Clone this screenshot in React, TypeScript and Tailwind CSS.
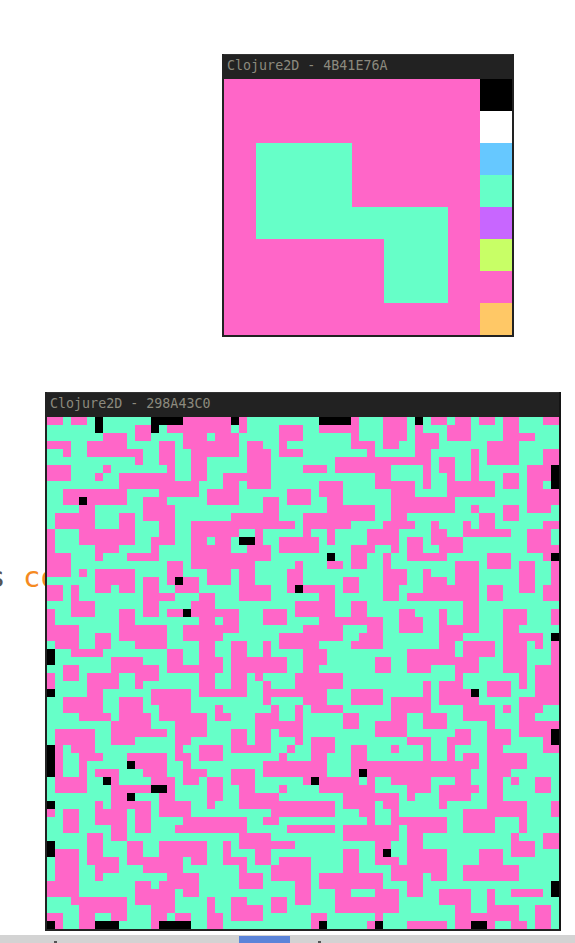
const PINK = [
  '0-2 3-5 17-23 24-25 38-39 42-45 48-50 51-53 54-56 57-59 62-64',
  '11-13 15-23 24-25 29-32 34-39 42-45 46-47 50-53 57-59',
  '7-10 11-13 17-20 21-24 29-32 38-39 42-45 46-49 50-53 57-61',
  '0-3 5-10 14-16 17-24 25-27 29-30 38-41 42-44 46-49 55-59',
  '2-3 5-12 14-16 18-24 25-28 29-32 40-41 46-48 53-54 55-59 62-64',
  '11-12 14-16 18-20 25-28 36-48 49-51 53-54 55-59 62-64',
  '0-3 7-8 15-16 18-20 25-28 32-35 36-43 47-48 49-51 53-54 60-63',
  '0-3 6-7 9-16 18-20 22-28 41-43 47-48 50-51 53-54 57-59 60-63',
  '9-19 22-24 25-28 34-37 41-46 47-48 50-56 57-59 60-62',
  '2-10 14-19 20-24 30-33 34-37 43-46 50-56 60-64',
  '2-4 5-10 12-15 20-24 27-29 30-33 35-37 43-51 60-64',
  '4-6 12-16 27-29 35-41 43-51 53-54 57-59 60-63',
  '1-6 9-11 12-16 23-29 32-41 43-45 54-56 57-59',
  '1-6 9-11 14-16 18-31 32-38 42-46 48-49 52-53 54-56 62-64',
  '0-1 4-11 14-16 18-24 26-27 32-33 35-36 40-44 48-50 52-58 60-63',
  '0-1 4-11 13-16 18-20 21-23 26-27 29-34 35-36 40-44 45-47 48-52 60-63',
  '0-1 6-9 13-14 18-23 25-28 29-34 38-41 43-44 45-47 49-52 60-64',
  '0-3 6-7 10-14 18-28 38-40 42-43 45-50 55-58 62-63',
  '0-3 15-17 18-26 31-32 35-37 38-40 42-43 51-54 55-58 59-61 63-64',
  '0-3 4-5 6-11 15-17 20-23 24-26 30-32 42-45 47-48 51-54 59-61 63-64',
  '6-11 12-14 15-16 17-19 20-23 24-26 30-32 37-39 42-45 47-50 51-54 59-61 63-64',
  '0-2 3-4 6-8 9-11 12-14 16-19 24-28 30-31 32-36 37-39 42-44 47-54 55-57 59-61 62-64',
  '0-2 3-4 12-16 19-21 24-28 34-36 42-44 45-54 55-57 62-64',
  '3-6 12-14 18-21 31-36 38-40 52-54',
  '0-1 3-6 9-11 12-14 15-17 18-24 27-30 31-36 38-40 44-46 49-50 52-54 57-60 63-64',
  '0-1 9-11 19-21 22-24 27-30 34-42 44-47 49-50 52-54 57-60 63-64',
  '0-4 9-15 17-24 32-37 40-42 44-47 49-54 57-59',
  '0-4 6-8 9-15 17-22 29-37 39-42 49-52 57-62',
  '1-4 6-8 11-15 19-21 23-25 27-28 29-34 38-42 49-51 52-56 57-60 61-62 63-64',
  '3-7 15-17 19-21 23-25 27-28 32-35 45-51 52-56 57-60 63-64',
  '8-12 15-17 19-22 23-30 32-35 41-43 45-54 57-60 63-64',
  '2-4 8-14 15-22 23-30 32-34 41-43 45-48 51-54 57-60 61-64',
  '0-1 2-4 5-9 11-14 19-21 23-25 26-27 31-37 51-52 59-60 61-64',
  '0-1 5-9 11-12 19-21 23-25 27-28 31-37 47-48 49-52 55-58 59-60 61-64',
  '5-7 13-18 19-25 27-35 38-42 47-48 49-53 55-58 61-64',
  '2-7 9-12 13-18 27-28 32-35 38-42 43-48 49-54 59-64',
  '2-7 9-12 14-18 21-22 28-29 31-32 33-37 43-48 52-56 57-58 59-62',
  '4-8 9-13 14-20 21-23 26-29 31-32 37-39 43-45 47-50 52-56 59-61',
  '8-13 16-20 26-32 37-39 41-45 47-50 55-56 59-64',
  '1-6 8-15 16-20 23-25 26-28 29-32 41-45 51-53 55-58 59-63',
  '1-6 8-11 16-18 23-25 26-28 31-32 33-36 45-48 50-53 55-58 62-63',
  '1-2 3-6 16-17 19-22 23-28 30-31 33-36 38-40 43-44 47-48 50-51 55-57 62-64',
  '1-2 4-7 10-15 16-18 19-22 29-30 33-35 38-40 47-48 50-51 52-54 55-60',
  '1-2 4-5 11-15 17-18 27-35 38-54 55-60',
  '1-2 4-5 6-9 12-15 17-20 23-26 27-35 38-39 40-53 55-58',
  '1-5 8-9 13-16 17-19 20-22 23-26 32-33 34-39 40-41 43-48 51-53 55-57 58-59 61-63',
  '1-5 8-13 15-16 20-22 24-26 29-30 34-41 45-48 49-54 55-57 61-63',
  '8-10 14-16 20-22 24-29 37-44 45-46 49-53 55-57',
  '6-7 8-13 14-18 20-21 24-36 37-41 42-44 49-50 55-60 63-64',
  '0-1 2-4 6-10 11-13 14-18 28-36 39-41 43-44 52-60 63-64',
  '2-4 6-10 11-13 17-25 27-29 40-41 43-50 52-56 59-60',
  '2-4 8-10 11-13 16-25 30-36 37-44 45-50 52-56 59-60',
  '5-7 8-10 24-28 37-44 45-47 58-59 62-64',
  '5-7 10-12 14-20 22-23 24-31 41-43 45-47 58-61 62-64',
  '1-4 5-7 10-12 14-20 22-23 26-28 37-39 41-42 45-50 54-57 58-61',
  '1-4 5-9 10-17 18-20 22-25 26-28 29-33 37-39 41-44 45-50 54-57',
  '1-4 6-9 12-17 24-25 28-33 37-39 43-50 52-59',
  '1-4 6-7 15-19 24-27 28-33 34-42 43-47 48-50 52-59',
  '0-4 11-13 14-19 24-27 31-33 34-42 45-47',
  '0-4 11-16 17-19 31-33 36-38 41-44 45-47 49-53 55-56 58-62',
  '3-10 11-16 20-21 23-25 28-30 31-33 36-44 49-53 55-56',
  '4-10 13-16 20-21 23-27 28-30 36-44 51-53 55-59 61-63',
  '0-2 4-6 8-10 13-15 16-18 20-22 23-27 33-35 41-42 51-59 61-63',
  '1-2 4-6 13-14 20-22 33-34 40-41 45-50 51-53 55-56 58-60 61-63',
]

// [row, column] of the cells that stayed black
const BLACK = [
  [0, 6], [0, 13], [0, 14], [0, 15], [0, 16], [0, 23], [0, 34], [0, 35], [0, 36], [0, 37], [0, 46],
  [1, 6], [1, 13], [6, 63], [7, 63], [8, 63], [10, 4], [15, 24], [15, 25],
  [17, 35], [17, 63], [20, 16], [21, 31], [24, 17], [27, 63], [29, 0], [30, 0], [34, 0], [34, 53],
  [39, 63], [40, 63], [41, 0], [42, 0], [43, 0], [43, 10], [44, 0], [44, 39], [45, 7], [45, 33],
  [46, 13], [46, 14], [47, 10], [48, 0], [53, 0], [54, 0], [54, 42], [58, 63], [59, 63],
  [63, 0], [63, 6], [63, 7], [63, 8], [63, 14], [63, 15], [63, 16], [63, 17], [63, 34], [63, 41], [63, 53], [63, 54],
]

const SWATCHES = ['#000000', '#ffffff', '#66c8ff', '#66ffc8', '#c866ff', '#c8ff66', '#ff66c8', '#ffc866']

function Titlebar({ title }: { title: string }) {
  return (
    <div className="h-[25px] border-t border-[#333333] bg-[#222222] pl-[3px] pt-[1px] text-[13.33px] leading-[20px] text-[#8c8a7e] font-['DejaVu_Sans_Mono',monospace]">
      {title}
    </div>
  )
}

function SmallCanvas() {
  return (
    <svg width={288} height={256} viewBox="0 0 9 8" shapeRendering="crispEdges" className="block">
      <rect width={9} height={8} fill="#ff66c8" />
      <path d="M1 2h3v2h3v3h-2v-2h-4z" fill="#66ffc8" />
      {SWATCHES.map((color, i) => (
        <rect key={color} x={8} y={i} width={1} height={1} fill={color} />
      ))}
    </svg>
  )
}

function NoiseCanvas() {
  return (
    <svg width={512} height={512} viewBox="0 0 64 64" shapeRendering="crispEdges" className="block">
      <rect width={64} height={64} fill="#66ffc8" />
      {PINK.map((row, r) =>
        row.split(' ').map((run) => {
          const [from, to] = run.split('-').map(Number)
          return <rect key={`${r}-${from}`} x={from} y={r} width={to - from} height={1} fill="#ff66c8" />
        })
      )}
      {BLACK.map(([r, c]) => (
        <rect key={`b${r}-${c}`} x={c} y={r} width={1} height={1} fill="#000000" />
      ))}
    </svg>
  )
}

export default function App() {
  return (
    <div className="relative h-[943px] w-[575px] overflow-hidden bg-white">
      {/* code line behind the windows */}
      <div className="absolute left-[-12px] top-[560px] whitespace-pre text-[29px] leading-[34px] font-['DejaVu_Sans_Mono',monospace] text-[#555555]">
        s <span className="text-[#f58a1f]">co</span>
      </div>

      <div className="absolute left-[222px] top-[54px] border-x-2 border-b-2 border-[#222222]">
        <Titlebar title="Clojure2D - 4B41E76A" />
        <SmallCanvas />
      </div>

      <div className="absolute left-[45px] top-[392px] border-x-2 border-b-2 border-[#222222] border-r-[#141414]">
        <Titlebar title="Clojure2D - 298A43C0" />
        <NoiseCanvas />
      </div>

      {/* scrollbar strip at the bottom edge */}
      <div className="absolute inset-x-0 bottom-0 h-[8px] bg-[#d3d3d3]">
        <div className="absolute left-[239px] top-[1px] h-[7px] w-[51px] bg-[#5b84d9]" />
        <div className="absolute left-[54px] top-[6px] h-[2px] w-[3px] bg-[#555555]" />
        <div className="absolute left-[318px] top-[6px] h-[2px] w-[3px] bg-[#555555]" />
      </div>
    </div>
  )
}
